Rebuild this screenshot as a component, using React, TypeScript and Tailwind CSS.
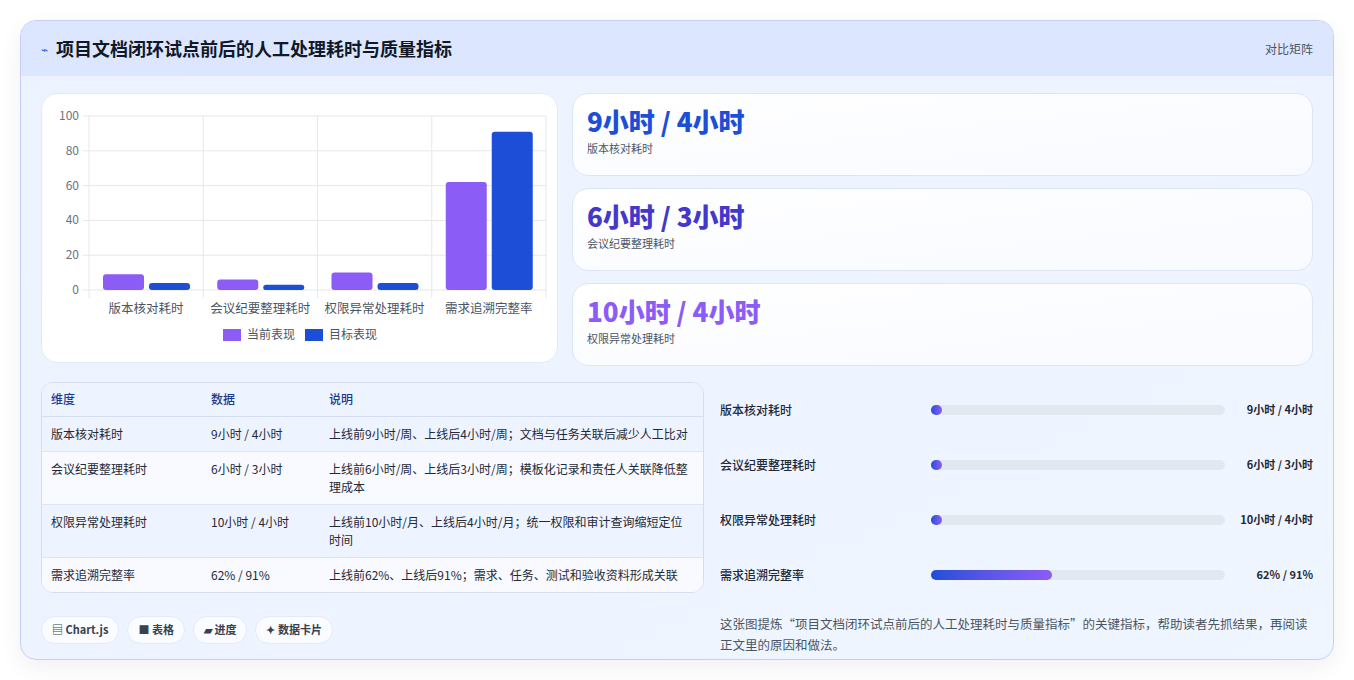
const font = { fontFamily: '"Noto Sans CJK SC", "Noto Sans", sans-serif' };

const bars = [
  { label: "版本核对耗时", cur: 9, tgt: 4 },
  { label: "会议纪要整理耗时", cur: 6, tgt: 3 },
  { label: "权限异常处理耗时", cur: 10, tgt: 4 },
  { label: "需求追溯完整率", cur: 62, tgt: 91 },
];

const Chart = () => {
  const x0 = 47, x1 = 504, y0 = 196, y1 = 22;
  const cw = (x1 - x0) / 4;
  const yv = (v: number) => y0 - ((y0 - y1) * v) / 100;
  return (
    <svg width="516" height="269" className="block">
      {[0, 20, 40, 60, 80, 100].map((v) => (
        <g key={v}>
          <line x1={x0 - 6} x2={x1} y1={yv(v)} y2={yv(v)} stroke="#e5e7eb" />
          <text x={x0 - 10} y={yv(v) + 4} textAnchor="end" fontSize="12" fill="#6b7280" style={font}>{v}</text>
        </g>
      ))}
      {[0, 1, 2, 3, 4].map((i) => (
        <line key={i} x1={x0 + i * cw} x2={x0 + i * cw} y1={y1} y2={y0 + 8} stroke="#e5e7eb" />
      ))}
      {bars.map((b, i) => (
        <g key={b.label}>
          <rect x={x0 + i * cw + 14} y={yv(b.cur)} width="41" height={y0 - yv(b.cur)} rx="3" fill="#8b5cf6" />
          <rect x={x0 + i * cw + 60} y={yv(b.tgt)} width="41" height={y0 - yv(b.tgt)} rx="3" fill="#1d4ed8" />
          <text x={x0 + i * cw + cw / 2} y={219} textAnchor="middle" fontSize="12.5" fill="#4b5563" style={font}>{b.label}</text>
        </g>
      ))}
      <rect x="181" y="235" width="18" height="12" fill="#8b5cf6" />
      <text x="205" y="245" fontSize="12" fill="#4b5563" style={font}>当前表现</text>
      <rect x="263" y="235" width="18" height="12" fill="#1d4ed8" />
      <text x="287" y="245" fontSize="12" fill="#4b5563" style={font}>目标表现</text>
    </svg>
  );
};

const stats = [
  { v: "9小时 / 4小时", l: "版本核对耗时", c: "text-[#1d4ed8]" },
  { v: "6小时 / 3小时", l: "会议纪要整理耗时", c: "text-[#4338ca]" },
  { v: "10小时 / 4小时", l: "权限异常处理耗时", c: "text-[#8b5cf6]" },
];

const rows = [
  ["版本核对耗时", "9小时 / 4小时", "上线前9小时/周、上线后4小时/周；文档与任务关联后减少人工比对"],
  ["会议纪要整理耗时", "6小时 / 3小时", "上线前6小时/周、上线后3小时/周；模板化记录和责任人关联降低整理成本"],
  ["权限异常处理耗时", "10小时 / 4小时", "上线前10小时/月、上线后4小时/月；统一权限和审计查询缩短定位时间"],
  ["需求追溯完整率", "62% / 91%", "上线前62%、上线后91%；需求、任务、测试和验收资料形成关联"],
];

const progress = [
  { l: "版本核对耗时", v: "9小时 / 4小时", w: 3 },
  { l: "会议纪要整理耗时", v: "6小时 / 3小时", w: 3 },
  { l: "权限异常处理耗时", v: "10小时 / 4小时", w: 3 },
  { l: "需求追溯完整率", v: "62% / 91%", w: 41 },
];

export default function App() {
  return (
    <div className="bg-white w-[1354px] h-[680px] pt-5 px-5" style={font}>
      <div className="h-[640px] rounded-2xl border border-[#c3cff5] bg-gradient-to-br from-[#ecf2ff] to-[#f0f6ff] overflow-hidden shadow-[0_8px_24px_rgba(0,0,0,0.06)]">
        <div className="h-[55px] bg-[#dce7ff] flex items-center justify-between px-5">
          <div className="flex items-center gap-2">
            <span className="text-[#3b5bdb] text-xs">⌁</span>
            <h1 className="text-[18px] font-bold text-[#111827]">项目文档闭环试点前后的人工处理耗时与质量指标</h1>
          </div>
          <span className="text-[12px] text-[#4b5563]">对比矩阵</span>
        </div>
        <div className="px-5 pt-[17px]">
          <div className="flex gap-[14px]">
            <div className="w-[517px] h-[270px] bg-white rounded-2xl border border-[#e3e9f7]">
              <Chart />
            </div>
            <div className="flex-1 flex flex-col gap-[12px]">
              {stats.map((s) => (
                <div key={s.l} className="h-[83px] rounded-2xl bg-gradient-to-br from-white to-[#f8faff] border border-[#dde5f5] px-[14px] pt-[10px]">
                  <div className={`text-[26px] font-extrabold leading-[34px] ${s.c}`}>{s.v}</div>
                  <div className="text-[11px] text-[#4b5563] mt-[2px]">{s.l}</div>
                </div>
              ))}
            </div>
          </div>
          <div className="flex gap-3 mt-[16px]">
            <div className="w-[663px]">
              <div className="rounded-xl border border-[#d5def0] overflow-hidden bg-[#f8faff]">
                <table className="w-full text-[12px] text-[#1f2937] border-collapse">
                  <thead>
                    <tr className="bg-[#eef4ff] text-[#1e3a8a] border-b border-[#d5def0]">
                      <th className="text-left font-medium px-[9px] h-[33px] w-[160px]">维度</th>
                      <th className="text-left font-medium px-[9px] w-[118px]">数据</th>
                      <th className="text-left font-medium px-[9px]">说明</th>
                    </tr>
                  </thead>
                  <tbody>
                    {rows.map((r, i) => (
                      <tr key={r[0]} className={`${i % 2 ? "bg-[#f8faff]" : "bg-[#eef4ff]"} ${i < 3 ? "border-b border-[#dde4f2]" : ""}`}>
                        <td className="px-[9px] py-[8px] align-top leading-[18px]">{r[0]}</td>
                        <td className="px-[9px] py-[8px] align-top leading-[18px]">{r[1]}</td>
                        <td className="px-[9px] py-[8px] align-top leading-[18px] pr-3">{r[2]}</td>
                      </tr>
                    ))}
                  </tbody>
                </table>
              </div>
              <div className="flex gap-2 mt-[23px]">
                {["▤ Chart.js", "■ 表格", "▰ 进度", "✦ 数据卡片"].map((t) => (
                  <span key={t} className="h-[28px] px-[10px] rounded-full bg-white/70 border border-[#e3e9f5] text-[11px] font-semibold text-[#374151] flex items-center">{t}</span>
                ))}
              </div>
            </div>
            <div className="flex-1 pl-1">
              {progress.map((p) => (
                <div key={p.l} className="h-[55px] flex items-center text-[12px] font-medium text-[#1f2937]">
                  <span className="w-[211px]">{p.l}</span>
                  <div className="flex-1 h-[10px] rounded-full bg-[#e2e8f0] mr-2">
                    <div className="h-full rounded-full bg-gradient-to-r from-[#1d4ed8] to-[#8b5cf6] min-w-[11px]" style={{ width: `${p.w}%` }} />
                  </div>
                  <span className="font-bold text-[11px] w-[80px] text-right">{p.v}</span>
                </div>
              ))}
              <p className="text-[12.5px] leading-[21px] text-[#4b5563] mt-[11px]">这张图提炼“项目文档闭环试点前后的人工处理耗时与质量指标”的关键指标，帮助读者先抓结果，再阅读正文里的原因和做法。</p>
            </div>
          </div>
        </div>
      </div>
    </div>
  );
}
